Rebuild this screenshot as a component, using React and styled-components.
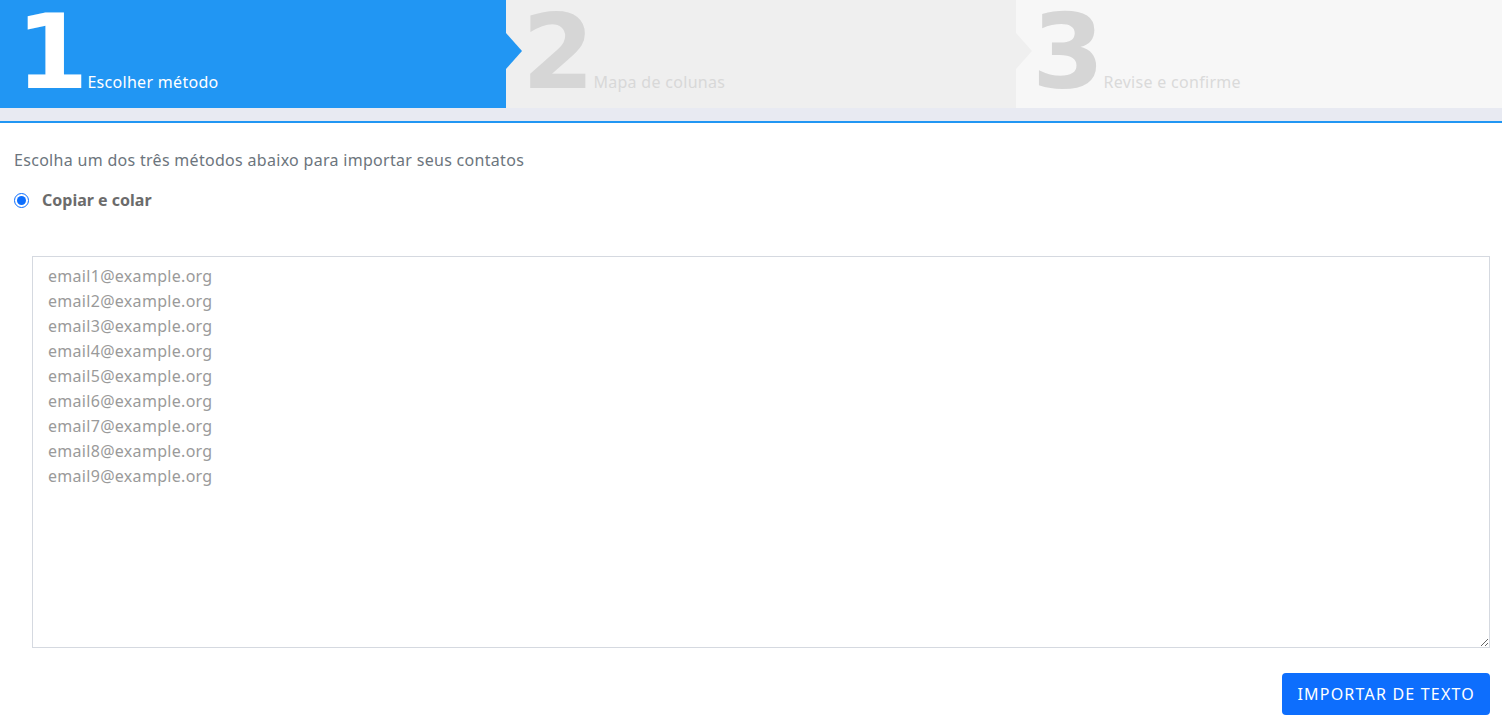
import React from 'react';
import styled, { createGlobalStyle } from 'styled-components';

const GlobalStyle = createGlobalStyle`
  body {
    margin: 0;
    background: #fff;
    font-family: "Noto Sans", "Open Sans", Arial, sans-serif;
    letter-spacing: 0.3px;
  }
`;

///////////// wizard header /////////////

const Steps = styled.div`
  display: flex;
  height: 108px;
`;

const Step = styled.div`
  position: relative;
  display: flex;
  align-items: baseline;
  width: ${props => props.width}px;
  padding-left: 16px;
  box-sizing: border-box;
  background: ${props => props.bg};
  color: ${props => props.labelColor};
  z-index: ${props => props.layer};
`;

const Arrow = styled.span`
  position: absolute;
  top: 33px;
  right: -16px;
  width: 0;
  height: 0;
  border-top: 18px solid transparent;
  border-bottom: 18px solid transparent;
  border-left: 16px solid ${props => props.color};
`;

const Number = styled.span`
  font-family: "DejaVu Sans", sans-serif;
  font-size: 104px;
  font-weight: 700;
  line-height: 104px;
  letter-spacing: -9px;
  color: ${props => props.color};
`;

const Label = styled.span`
  margin-left: 8px;
  font-size: 16px;
`;

const Band = styled.div`
  height: 13px;
  background: #e8eaf2;
  border-bottom: 2px solid #2196f3;
`;

///////////// import form /////////////

const Body = styled.div`
  padding: 25px 12px 0 14px;
  color: #6c757d;
`;

const Intro = styled.p`
  margin: 0;
  font-size: 16px;
  line-height: 24px;
`;

const Choice = styled.label`
  display: flex;
  align-items: center;
  gap: 13px;
  margin-top: 17px;
  font-size: 16px;
  font-weight: 700;
  letter-spacing: 0;
  color: #6b6b6b;
`;

const Radio = styled.input`
  width: 15px;
  height: 15px;
  margin: 0;
  accent-color: #0d6efd;
`;

const Paste = styled.textarea`
  display: block;
  width: calc(100% - 18px);
  height: 392px;
  margin: 45px 0 0 18px;
  box-sizing: border-box;
  padding: 7px 15px;
  border: 1px solid #d5d9e0;
  font-family: inherit;
  font-size: 16px;
  line-height: 25px;
  letter-spacing: 0.3px;
  color: #555;

  &::placeholder {
    color: #9a9a9a;
  }
`;

const Actions = styled.div`
  display: flex;
  justify-content: flex-end;
  margin-top: 25px;
`;

const Button = styled.button`
  height: 42px;
  padding: 0 15px;
  border: none;
  border-radius: 4px;
  background: #0d6efd;
  color: #fff;
  font-family: inherit;
  font-size: 16px;
  letter-spacing: 1.2px;
`;

const steps = [
  { n: '1', label: 'Escolher método', width: 506, bg: '#2196f3', num: '#fff', text: '#fff' },
  { n: '2', label: 'Mapa de colunas', width: 510, bg: '#efefef', num: '#d6d6d6', text: '#d8d8d8' },
  { n: '3', label: 'Revise e confirme', width: 486, bg: '#f7f7f7', num: '#d6d6d6', text: '#dadada' }
];

const emails = Array.from({ length: 9 }, (_, i) => `email${i + 1}@example.org`).join('\n');

export default function App() {
  return (
    <div>
      <GlobalStyle />
      <Steps>
        {steps.map((s, i) => (
          <Step key={s.n} width={s.width} bg={s.bg} labelColor={s.text} layer={steps.length - i}>
            <Number color={s.num}>{s.n}</Number>
            <Label>{s.label}</Label>
            {i < steps.length - 1 && <Arrow color={s.bg} />}
          </Step>
        ))}
      </Steps>
      <Band />
      <Body>
        <Intro>Escolha um dos três métodos abaixo para importar seus contatos</Intro>
        <Choice>
          <Radio type="radio" name="method" defaultChecked />
          Copiar e colar
        </Choice>
        <Paste placeholder={emails} />
        <Actions>
          <Button>IMPORTAR DE TEXTO</Button>
        </Actions>
      </Body>
    </div>
  );
}
